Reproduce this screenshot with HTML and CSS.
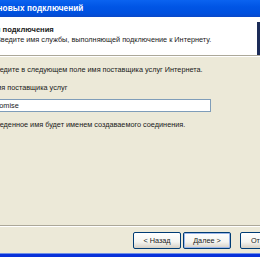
FILE: index.html
```html
<!DOCTYPE html>
<html lang="ru">
<head>
<meta charset="utf-8">
<link rel="stylesheet" href="styles.css">
</head>
<body>
<div class="window">
  <div class="titlebar"><span class="title">Мастер новых подключений</span></div>
  <div class="header">
    <div class="header-text">
      <div class="h-title">Имя подключения</div>
      <div class="h-sub">Введите имя службы, выполняющей подключение к Интернету.</div>
    </div>
    <div class="h-icon"></div>
  </div>
  <div class="content">
    <p class="line1">Введите в следующем поле имя поставщика услуг Интернета.</p>
    <p class="line2">Имя поставщика услуг</p>
    <div class="input"><span class="value">Promise</span></div>
    <p class="line3">Введенное имя будет именем создаваемого соединения.</p>
  </div>
  <div class="footer">
    <div class="btn">&lt; Назад</div>
    <div class="btn default">Далее &gt;</div>
    <div class="btn">Отмена</div>
  </div>
  <div class="frame-bottom"></div>
</div>
</body>
</html>
```
FILE: styles.css
```css
html, body {
  margin: 0;
  padding: 0;
  width: 260px;
  height: 257px;
  overflow: hidden;
  background: #ece9d8;
}
.window {
  font-family: "Liberation Sans", Arial, sans-serif;
  font-size: 7.3px;
  color: #1a1a1a;
  display: flex;
  flex-direction: column;
  height: 257px;
  width: 260px;
}
.titlebar {
  height: 17px;
  flex: none;
  background: linear-gradient(#0a63f0, #0055e5 40%, #0050de 80%, #0a48c8);
  display: flex;
  align-items: center;
  overflow: hidden;
}
.title {
  color: #fff;
  font-weight: bold;
  font-size: 8.2px;
  white-space: nowrap;
  margin-left: -35px;
  letter-spacing: 0.1px;
}
.header {
  height: 38px;
  flex: none;
  background: #fff;
  border-bottom: 1px solid #aca899;
  box-shadow: 0 1px 0 #fff;
  display: flex;
  overflow: hidden;
}
.header-text {
  flex: 1;
  padding-top: 8px;
  white-space: nowrap;
  overflow: hidden;
}
.h-title {
  font-weight: bold;
  font-size: 7.6px;
  margin-left: -15px;
  line-height: 10px;
}
.h-sub {
  margin-left: -4px;
  line-height: 10px;
  margin-top: 0;
}
.h-icon {
  width: 3px;
  flex: none;
  margin: 5px 0 0 0;
  background: #1c2c58;
}
.content {
  flex: 1;
  padding-top: 9px;
  white-space: nowrap;
  overflow: hidden;
}
.content p {
  margin: 0;
  line-height: 10px;
}
.line1 {
  margin-left: -9px !important;
}
.line2 {
  margin-left: -9px !important;
  margin-top: 8px !important;
}
.input {
  margin: 6px 0 0 -12px;
  width: 218px;
  height: 11px;
  background: #fff;
  border: 1px solid #7f9db9;
  display: flex;
  align-items: center;
  padding-left: 3px;
}
.value {
  line-height: 10px;
}
.line3 {
  margin-left: -9px !important;
  margin-top: 8px !important;
}
.footer {
  height: 28px;
  flex: none;
  border-top: 1px solid #aca899;
  box-shadow: inset 0 1px 0 #fff;
  display: flex;
  align-items: center;
  gap: 2px;
  padding-left: 133px;
  padding-top: 2px;
  box-sizing: border-box;
}
.btn {
  flex: none;
  width: 46px;
  height: 15px;
  border: 1px solid #003c74;
  border-radius: 2px;
  background: linear-gradient(#ffffff, #f4f4f0 60%, #d6d0c5);
  display: flex;
  align-items: center;
  justify-content: center;
  font-size: 7.3px;
  color: #1a1a1a;
  white-space: nowrap;
}
.btn.default {
  box-shadow: inset 0 0 0 1px #9db7e9;
}
.btn:last-child {
  margin-left: 7px;
}
.frame-bottom {
  height: 4px;
  flex: none;
  background: #0831d9;
  border-top: 1px solid #6f8fe8;
  box-sizing: border-box;
}
```
